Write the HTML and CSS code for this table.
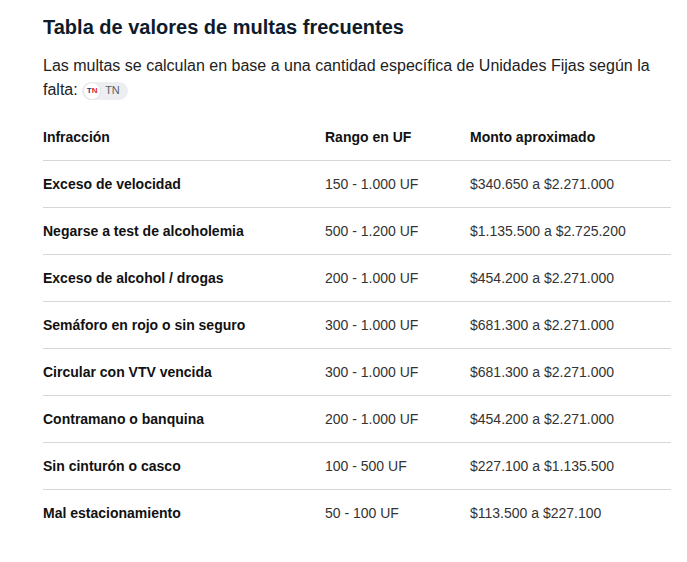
FILE: index.html
```html
<!DOCTYPE html>
<html lang="es">
<head>
<meta charset="utf-8">
<title>Tabla de valores de multas frecuentes</title>
<link rel="stylesheet" href="styles.css">
</head>
<body>
<main class="article">
  <h2 class="title">Tabla de valores de multas frecuentes</h2>
  <p class="intro">Las multas se calculan en base a una cantidad específica de Unidades Fijas según la falta: <span class="source"><span class="source-logo"><span class="logo-t">T</span><span class="logo-n">N</span></span><span class="source-name">TN</span></span></p>
  <table class="fines">
    <thead>
      <tr><th class="c1">Infracción</th><th class="c2">Rango en UF</th><th class="c3">Monto aproximado</th></tr>
    </thead>
    <tbody>
      <tr><td class="c1">Exceso de velocidad</td><td>150 - 1.000 UF</td><td>$340.650 a $2.271.000</td></tr>
      <tr><td class="c1">Negarse a test de alcoholemia</td><td>500 - 1.200 UF</td><td>$1.135.500 a $2.725.200</td></tr>
      <tr><td class="c1">Exceso de alcohol / drogas</td><td>200 - 1.000 UF</td><td>$454.200 a $2.271.000</td></tr>
      <tr><td class="c1">Semáforo en rojo o sin seguro</td><td>300 - 1.000 UF</td><td>$681.300 a $2.271.000</td></tr>
      <tr><td class="c1">Circular con VTV vencida</td><td>300 - 1.000 UF</td><td>$681.300 a $2.271.000</td></tr>
      <tr><td class="c1">Contramano o banquina</td><td>200 - 1.000 UF</td><td>$454.200 a $2.271.000</td></tr>
      <tr><td class="c1">Sin cinturón o casco</td><td>100 - 500 UF</td><td>$227.100 a $1.135.500</td></tr>
      <tr><td class="c1">Mal estacionamiento</td><td>50 - 100 UF</td><td>$113.500 a $227.100</td></tr>
    </tbody>
  </table>
</main>
</body>
</html>
```
FILE: styles.css
```css
html, body {
  margin: 0;
  padding: 0;
  background: #ffffff;
}
body {
  font-family: "Liberation Sans", Arial, sans-serif;
}
.article {
  padding: 13px 16px 0 43px;
  width: 628px;
}
.title {
  margin: 0;
  font-size: 20px;
  line-height: 28px;
  font-weight: 700;
  color: #0e1b2b;
}
.intro {
  margin: 13px 0 0 0;
  font-size: 16px;
  line-height: 24px;
  color: #222222;
}
.source {
  display: inline-flex;
  align-items: center;
  height: 18px;
  padding: 0 8px 0 2px;
  border-radius: 9px;
  background: #eceef1;
  vertical-align: middle;
  gap: 5px;
  line-height: 1;
}
.source-logo {
  display: inline-flex;
  align-items: center;
  justify-content: center;
  width: 16px;
  height: 16px;
  border-radius: 50%;
  background: #ffffff;
  box-shadow: 0 0 0 1px #e2e4e8;
  font-size: 8px;
  font-weight: 700;
  line-height: 1;
}
.logo-t { color: #1f3f93; }
.logo-n { color: #e4262d; }
.source-name {
  font-size: 11px;
  line-height: 1;
  color: #5a5f66;
}
.fines {
  margin-top: 12px;
  width: 628px;
  border-collapse: collapse;
  font-size: 14px;
  line-height: 20px;
}
.fines th,
.fines td {
  text-align: left;
  padding: 13px 0;
  vertical-align: middle;
}
.fines th {
  font-weight: 700;
  color: #111111;
}
.fines td {
  color: #333333;
}
.fines .c1 {
  width: 282px;
  font-weight: 700;
  color: #111111;
}
.fines .c2 {
  width: 145px;
}
.fines thead tr,
.fines tbody tr {
  border-bottom: 1px solid #d6d6d6;
}
.fines tbody tr:last-child {
  border-bottom: none;
}
```
